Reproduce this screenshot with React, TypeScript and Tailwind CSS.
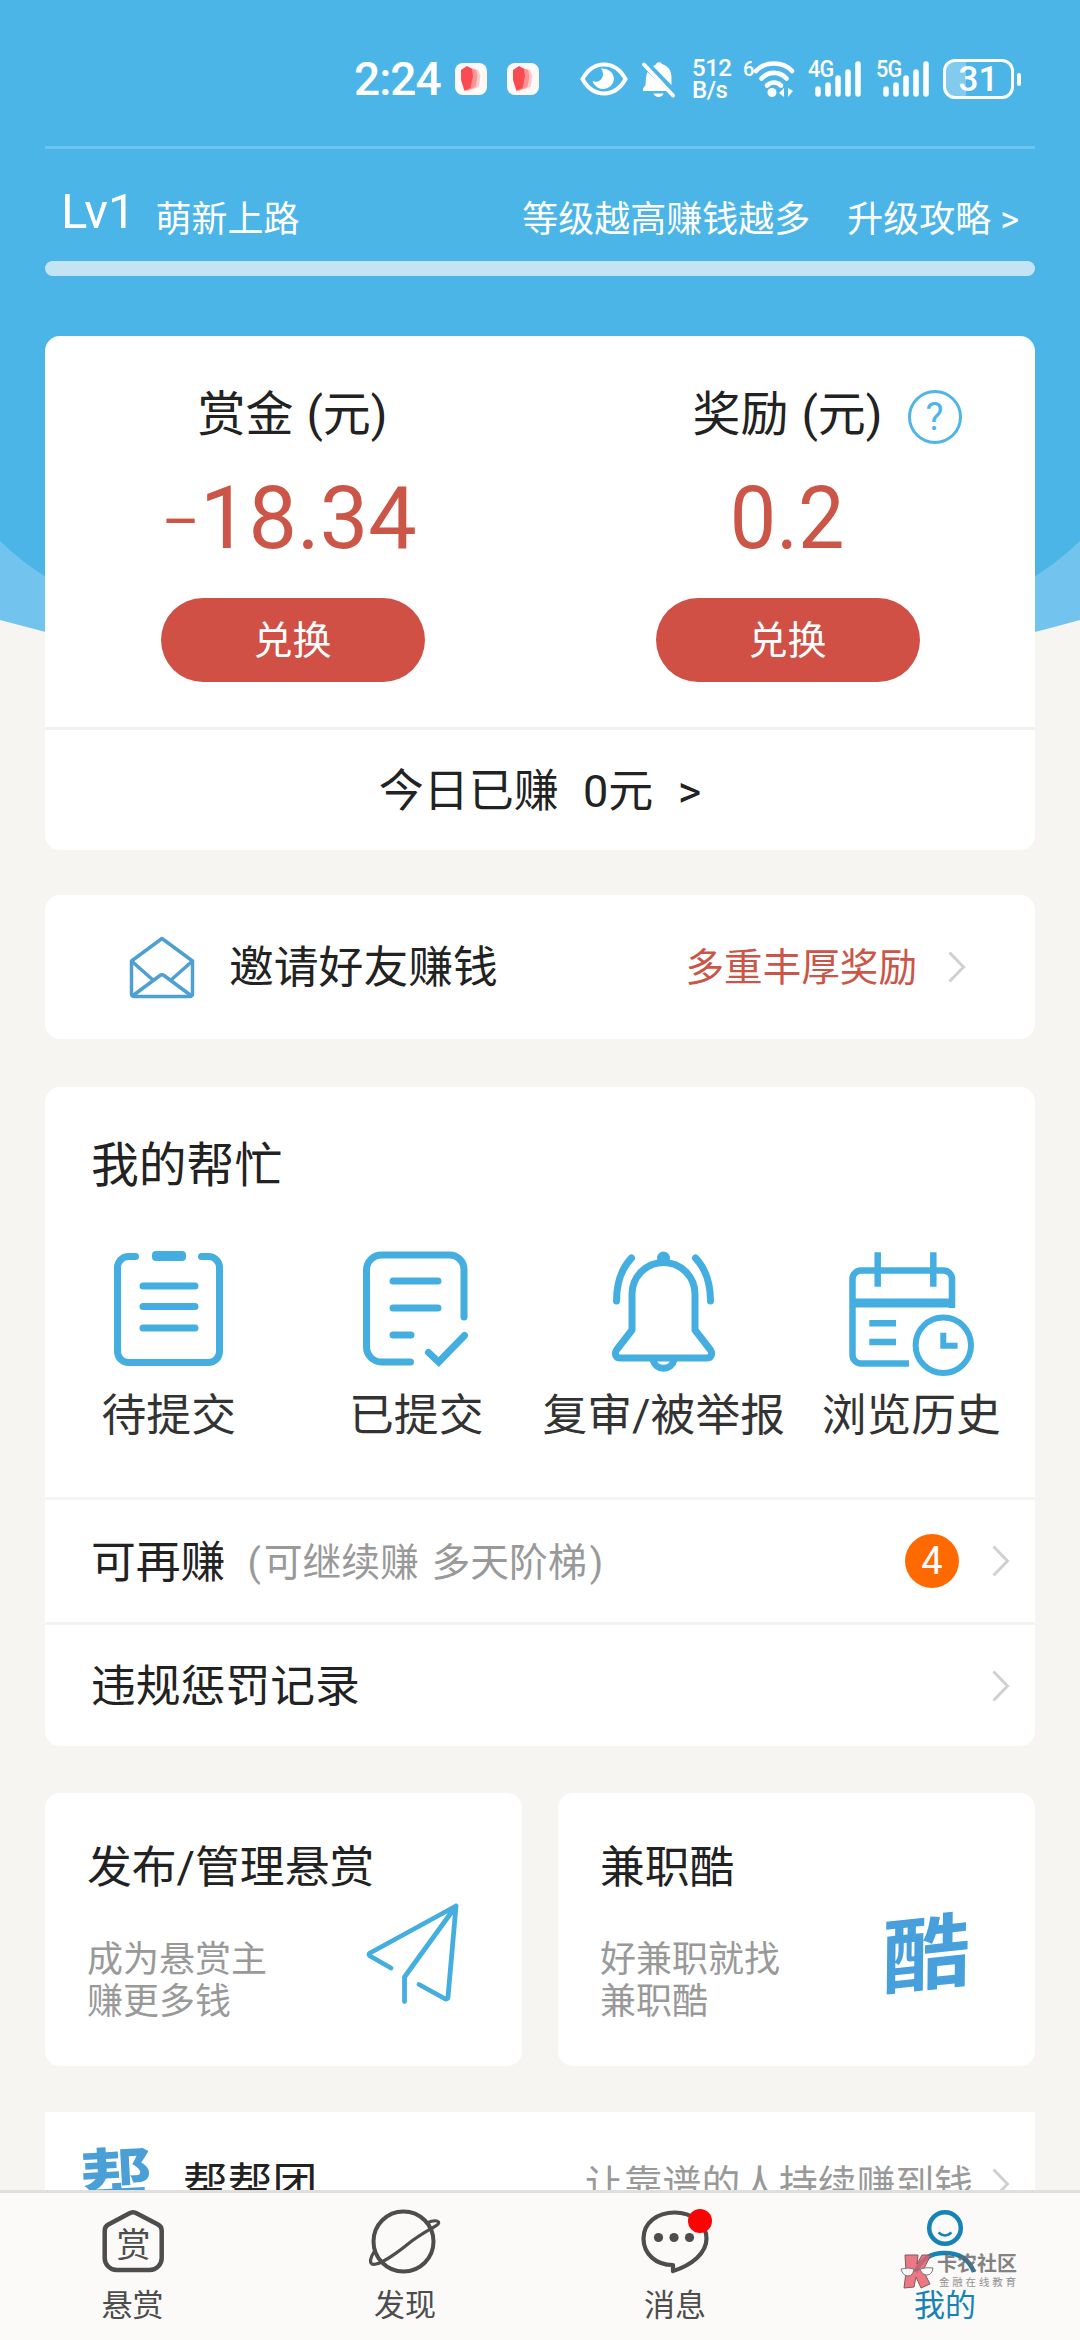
import React from 'react';

const ICON_BLUE = '#45aee0';

const HELP_ITEMS = [
  { label: '待提交', icon: <ClipboardIcon /> },
  { label: '已提交', icon: <SubmittedIcon /> },
  { label: '复审/被举报', icon: <BellIcon /> },
  { label: '浏览历史', icon: <HistoryIcon /> },
];

function ClipboardIcon() {
  return (
    <svg width="120" height="130" viewBox="0 0 120 130" fill="none" stroke={ICON_BLUE} strokeWidth="7" strokeLinecap="round">
      <path d="M26.5 8.5H19.5a11 11 0 0 0-11 11v84a11 11 0 0 0 11 11h80a11 11 0 0 0 11-11v-84a11 11 0 0 0-11-11H92.500" />
      <path d="M34 38h52M34 58.500h52M34 80h52" />
      <rect x="43" y="3" width="34" height="10" rx="4" fill={ICON_BLUE} stroke="none" />
    </svg>
  );
}

function SubmittedIcon() {
  return (
    <svg width="120" height="130" viewBox="0 0 120 130" fill="none" stroke={ICON_BLUE} strokeWidth="7" strokeLinecap="round">
      <path d="M54.500 114H25.500a15 15 0 0 1-15-15V22a15 15 0 0 1 15-15h68A14.500 14.500 0 0 1 108 21.500V69" />
      <path d="M37 33h45M37 60h45M37 87h18" />
      <path d="M72.500 104.500l10.200 9.500L108.500 87.500" />
    </svg>
  );
}

function BellIcon() {
  return (
    <svg width="120" height="130" viewBox="0 0 120 130" fill="none" stroke={ICON_BLUE} strokeWidth="7" strokeLinecap="round">
      <path d="M28 82V46a31.500 31.500 0 0 1 63 0v36l15.500 20c2.500 4 .5 8-3.500 8H16c-4 0-6-4-3.500-8z" strokeLinejoin="round" />
      <circle cx="59.5" cy="10" r="6.500" fill={ICON_BLUE} stroke="none" />
      <path d="M49 112a10.800 10.800 0 0 0 21 0" strokeLinecap="butt" />
      <path d="M27.500 10C18 20 12.500 34 12.500 53M91.500 10C101 20 106.500 34 106.500 53" />
    </svg>
  );
}

function HistoryIcon() {
  return (
    <svg width="134" height="130" viewBox="0 0 134 130" fill="none" stroke={ICON_BLUE} strokeWidth="6.500">
      <path d="M65 115.500H17a8.500 8.500 0 0 1-8.500-8.500V31a8.500 8.500 0 0 1 8.500-8.500h82.500A8.500 8.500 0 0 1 108 31v29" />
      <path d="M8.500 55h99.500" strokeWidth="9" />
      <path d="M33.700 4.300v34.400M89.300 4.300v34.400M25.300 75.300H52M25.300 94H52" />
      <circle cx="99.300" cy="97.300" r="27.700" strokeWidth="6" />
      <path d="M99.300 84.700v13h14.300" strokeWidth="6" />
    </svg>
  );
}

function Chevron() {
  return (
    <svg width="18" height="32" viewBox="0 0 18 32" fill="none" stroke="#d0d0d0" strokeWidth="3" className="shrink-0">
      <path d="M1.500 1.500L15.500 16l-14 14.500" />
    </svg>
  );
}

const AppBadge: React.FC = () => (
  <svg width="32" height="32" viewBox="0 0 32 32">
    <rect width="32" height="32" rx="8" fill="#fdf9f8" />
    <path d="M13 4l10 3 2.500 6-2 11L12 28z" fill="#fcc9c9" />
    <path d="M12 4l9 3 1.500 6-2 11-9 4z" fill="#fb9497" />
    <path d="M6 7l6-4 5 3 1 7-2.500 12-6 3L6 17z" fill="#fb4b52" />
  </svg>
);

const Signal: React.FC<{ label: string }> = ({ label }) => (
  <div className="relative w-[54px] h-[38px]">
    <span className="absolute left-0 top-0 origin-left scale-x-90 text-[24px] leading-[19px] font-medium tracking-[-1px]">{label}</span>
    <svg width="54" height="38" viewBox="0 0 54 38" stroke="#fff" strokeWidth="5.500" strokeLinecap="round">
      <path d="M10 29v5M20 25v9M30 18v16M40 12v22M50 4v30" />
    </svg>
  </div>
);

const StatusBar: React.FC = () => (
  <div className="flex items-center h-[146px] pl-[354px] pt-[12px] text-white">
    <span className="w-[101px] text-[46px] leading-none font-medium tracking-[-1px]">2:24</span>
    <AppBadge />
    <div className="w-[20px]" />
    <AppBadge />
    <svg width="48" height="36" viewBox="0 0 48 36" className="ml-[41px]">
      <path d="M2.500 18C8 8 15 3.500 24 3.500S40 8 45.500 18C40 28 33 32.500 24 32.500S8 28 2.500 18z" fill="none" stroke="#fff" strokeWidth="4" />
      <path d="M21 7.500c5-.5 13 2.500 13 11a11 11 0 0 1-21.500 1.500c4 2 8.500 0 10-4 1-3 .5-6-1.500-8.500z" fill="#fff" />
    </svg>
    <svg width="36" height="40" viewBox="0 0 36 40" className="ml-[13px]">
      <path d="M6.500 13C4.500 17 5 22 4.500 26L2 29.500V32h25zM12 7l3-1.500C15 3 20 2 21 5c7 2.500 9.500 7 9.500 14v7z" fill="#fff" />
      <path d="M12.500 34.500h10c-1 4.500-9 4.500-10 0z" fill="#fff" />
      <path d="M3 5.500l29 31" stroke="#fff" strokeWidth="4" strokeLinecap="round" />
    </svg>
    <div className="ml-[15px] w-[51px] text-[24px] font-medium tracking-[-0.5px]">
      <div className="h-[22px] leading-[22px]">512</div>
      <div className="h-[22px] leading-[22px]">B/s</div>
    </div>
    <div className="relative w-[52px] h-[38px]">
      <span className="absolute left-0 top-0 text-[20px] leading-[19px] font-medium">6</span>
      <svg width="52" height="38" viewBox="0 0 52 38" fill="none" stroke="#fff" strokeWidth="4.600" strokeLinecap="round">
        <path d="M13 11c9-10 27-10 36 0M18.500 18.500c7-7.500 18-7.500 25 0" />
        <path d="M24 25.500c4-4 10-4 14 0" />
        <circle cx="29" cy="32.500" r="4.500" fill="#fff" stroke="none" />
        <path d="M41 28v9l-5-4zM45 37v-9l5 3z" fill="#fff" stroke="none" />
      </svg>
    </div>
    <div className="ml-[13px]"><Signal label="4G" /></div>
    <div className="ml-[14px]"><Signal label="5G" /></div>
    <div className="ml-[13px] w-[71px] h-[40px] rounded-[12px] border-[3px] border-white bg-linear-to-r from-white/30 from-31% to-transparent to-31% flex items-center justify-center text-[35px] leading-none font-medium">
      31
    </div>
    <div className="ml-[3px] w-[4px] h-[13px] rounded-full bg-white" />
  </div>
);

const Balance: React.FC<{ title: string; amount: React.ReactNode; help?: boolean }> = ({ title, amount, help }) => (
  <div className="flex-1 flex flex-col items-center">
    <div className="relative mt-[53px] h-[52px] flex items-center text-[48px] leading-none text-[#222] [word-spacing:1px]">
      {title}
      {help && (
        <div className="absolute left-full ml-[25px] top-px size-[54px] rounded-full border-[3px] border-[#4fb4e6] text-[#4fb4e6] text-[38px] flex items-center justify-center">
          ?
        </div>
      )}
    </div>
    <div className="mt-[33px] h-[88px] text-[88px] leading-[88px] text-[#cb5546]">{amount}</div>
    <button className="mt-[36px] w-[264px] h-[84px] rounded-full bg-[#d15045] text-white text-[39px] leading-none pt-[2px]">兑换</button>
  </div>
);

const TABS = [
  {
    label: '悬赏',
    icon: (
      <div className="relative size-[66px] flex items-center justify-center text-[34px] leading-none">
        <svg width="66" height="66" viewBox="0 0 66 66" fill="none" stroke="#4d4d4d" strokeWidth="4.500" className="absolute inset-0">
          <path d="M29 5.500q4-2.500 8 0L58 16.500q3.700 2 3.700 6V50a12 12 0 0 1-12 12h-33a12 12 0 0 1-12-12V22.500q0-4 3.700-6z" />
        </svg>
        <span className="pt-[8px] pl-[2px]">赏</span>
      </div>
    ),
  },
  {
    label: '发现',
    icon: (
      <svg width="74" height="66" viewBox="0 0 74 66" fill="none" stroke="#4d4d4d" strokeWidth="4">
        <circle cx="35.500" cy="33.500" r="30" />
        <path d="M6.500 43C2 50 1.500 54.500 4 56c4.500 2 18-5.500 36-20C58 21.500 72.500 17.500 70.500 14c-1.500-2-6-1.500-12 1" strokeWidth="3.200" />
      </svg>
    ),
  },
  {
    label: '消息',
    icon: (
      <div className="relative w-[70px] h-[66px]">
        <svg width="70" height="66" viewBox="0 0 70 66" fill="none" stroke="#4d4d4d" strokeWidth="4.200">
          <path d="M33 57C16 57 3.500 46 3.500 30.500S17 4.500 34.500 4.500s32 11 32 26C66.500 45 52 57 33 63z" strokeLinejoin="round" />
          <g fill="#4d4d4d" stroke="none">
            <circle cx="18.500" cy="29.500" r="4.600" />
            <circle cx="34" cy="29.500" r="4.600" />
            <circle cx="49.500" cy="29.500" r="4.600" />
          </g>
        </svg>
        <span className="absolute left-[48px] top-[1px] size-[24px] rounded-full bg-[#fd0202]" />
      </div>
    ),
  },
  {
    label: '我的',
    active: true,
    icon: (
      <svg width="66" height="66" viewBox="0 0 66 66" fill="none" stroke="#1583b5" strokeWidth="4.500">
        <circle cx="33" cy="20" r="15.800" />
        <path d="M26.500 24.500q6.500 6 13 0" strokeWidth="2.500" />
        <path d="M3.500 64C9 51 19 45 32.500 45S57 51 62 64" />
      </svg>
    ),
  },
];

const App: React.FC = () => {
  return (
    <div className="relative w-[1080px] h-[2340px] overflow-hidden bg-[#f6f5f2] flex flex-col font-['Roboto','Noto_Sans_CJK_SC',sans-serif] text-[#222]">
      <svg width="1080" height="720" viewBox="0 0 1080 720" className="absolute left-0 top-0">
        <path d="M0 0H1080V620Q810 695 540 700Q270 695 0 620z" fill="#72c4ee" />
        <path d="M0 0H1080V541Q960 660 540 700Q120 660 0 541z" fill="#4cb5e8" />
      </svg>

      <main className="relative flex-1 min-h-0 overflow-hidden px-[45px]">
        <div className="-mx-[45px]"><StatusBar /></div>

        <div className="h-[3px] bg-[#6cc4ef]" />
        <div className="h-[112px] flex items-start px-[16px] text-[36px] leading-[36px] text-white">
          <span className="pt-[38px] text-[49px] leading-[49px]">Lv1</span>
          <span className="pt-[53px] ml-[20px]">萌新上路</span>
          <span className="pt-[53px] ml-auto">等级越高赚钱越多</span>
          <span className="pt-[53px] ml-[37px]">升级攻略 &gt;</span>
        </div>
        <div className="h-[15px] rounded-full bg-[#c5e4f3]" />

        {/* 余额 */}
        <section className="mt-[60px] h-[514px] rounded-[15px] bg-white">
          <div className="flex h-[391px]">
            <Balance
              title="赏金 (元)"
              amount={
                <span className="inline-block scale-x-98">
                  <span className="inline-block scale-x-140 mr-[7px] font-light">-</span>18.34
                </span>
              }
            />
            <Balance title="奖励 (元)" amount={<span className="inline-block scale-x-94">0.2</span>} help />
          </div>
          <div className="h-[3px] bg-[#f1f1f1]" />
          <div className="h-[120px] pt-[3px] flex items-center justify-center text-[45px] leading-none whitespace-pre [word-spacing:1px]">
            今日已赚  0元  &gt;
          </div>
        </section>

        {/* 邀请 */}
        <section className="mt-[45px] h-[144px] rounded-[15px] bg-white flex items-center pl-[83px] pr-[69px]">
          <svg width="68" height="68" viewBox="0 0 68 68" fill="none" stroke="#4fa0d2" strokeWidth="3.500" strokeLinejoin="round">
            <path d="M34 5.500L3.500 28v32.500q0 3 3 3h55q3 0 3-3V28z" />
            <path d="M3.500 28L25 47M64.500 28L43 47M5 62.500L32 42.500q2-1.500 4 0l27 20" />
          </svg>
          <span className="ml-[33px] pt-[3px] text-[44.800px] leading-none">邀请好友赚钱</span>
          <span className="ml-auto mr-[31px] pt-[3px] text-[38.600px] leading-none text-[#cb5546]">多重丰厚奖励</span>
          <Chevron />
        </section>

        {/* 我的帮忙 */}
        <section className="mt-[48px] h-[659px] rounded-[15px] bg-white">
          <h2 className="h-[161px] pl-[46px] pt-[54px] text-[47.800px] leading-[50px]">我的帮忙</h2>
          <div className="h-[249px] grid grid-cols-4">
            {HELP_ITEMS.map((item) => (
              <div key={item.label} className="flex flex-col items-center">
                {item.icon}
                <span className="mt-[15px] text-[44.800px] leading-[45px] whitespace-nowrap text-[#333]">{item.label}</span>
              </div>
            ))}
          </div>
          <div className="h-[125px] border-t-[3px] border-[#f3f3f3] flex items-center pl-[46px] pr-[25px] text-[44.800px] leading-none">
            <span className="pt-[4px]">可再赚</span>
            <span className="ml-[22px] pt-[4px] text-[38.800px] text-[#999] [word-spacing:3px]">
              <span className="mr-[3px]">(</span>可继续赚 多天阶梯<span className="ml-[3px]">)</span>
            </span>
            <span className="ml-auto mr-[33px] size-[54px] rounded-full bg-[#ff6a00] text-white text-[38px] flex items-center justify-center">4</span>
            <Chevron />
          </div>
          <div className="h-[124px] border-t-[3px] border-[#f3f3f3] flex items-center justify-between pl-[46px] pr-[25px] text-[44.800px] leading-none">
            <span className="pt-[4px]">违规惩罚记录</span>
            <Chevron />
          </div>
        </section>

        <div className="mt-[47px] h-[273px] grid grid-cols-2 gap-[36px]">
          <section className="rounded-[15px] bg-white pl-[42px] pr-[58px] pt-[52px]">
            <h3 className="text-[44.800px] leading-[46px]">发布/管理悬赏</h3>
            <div className="flex justify-between">
              <p className="pt-[48px] text-[36px] leading-[42px] text-[#999]">成为悬赏主<br />赚更多钱</p>
              <svg width="100" height="108" viewBox="0 0 100 108" fill="none" stroke={ICON_BLUE} strokeWidth="4.800" strokeLinecap="round" strokeLinejoin="round" className="mt-[9px]">
                <path d="M27 68L6 56q-2-1.500 0-3L92 6 84 97q-.5 3-3.500 1.500L55 84.500M92 6L40.500 77v24.500" />
              </svg>
            </div>
          </section>
          <section className="rounded-[15px] bg-white pl-[42px] pr-[65px] pt-[52px]">
            <h3 className="text-[44.800px] leading-[46px]">兼职酷</h3>
            <div className="flex justify-between">
              <p className="pt-[48px] text-[36px] leading-[42px] text-[#999]">好兼职就找<br />兼职酷</p>
              <span className="mt-[19px] -skew-x-6 -rotate-6 scale-y-92 text-[88px] leading-[90px] font-bold text-[#479fdb]">酷</span>
            </div>
          </section>
        </div>

        <section className="mt-[46px] h-[144px] bg-white flex items-center pl-[36px] pr-[25px]">
          <span className="text-[72px] leading-none font-bold text-[#4a9fd6] -rotate-3">帮</span>
          <span className="ml-[30px] pt-[2px] text-[44.800px] leading-none">帮帮团</span>
          <span className="ml-auto mr-[19px] pt-[2px] text-[38.800px] leading-none text-[#999]">让靠谱的人持续赚到钱</span>
          <Chevron />
        </section>
      </main>

      <nav className="relative h-[150px] border-t-[3px] border-[#e0dfdd] bg-[#fbfaf8] grid grid-cols-4">
        {TABS.map((tab) => (
          <div
            key={tab.label}
            className={`flex flex-col items-center pt-[15px] ${tab.active ? 'text-[#1583b5]' : 'text-[#4d4d4d]'} first:pr-[5px]`}
          >
            {tab.icon}
            <span className="mt-[16px] text-[31px] leading-[32px]">{tab.label}</span>
          </div>
        ))}

        <div className="absolute left-[900px] top-[61px] flex">
          <svg width="34" height="35" viewBox="0 0 34 35">
            <path d="M5 1h13l-1 9 5-9h9l-8 15 7 14-9 4-5-11-2 10-10 1 2-16z" fill="#e8606e" fillOpacity=".85" stroke="#7d5c60" strokeWidth="1" />
            <path d="M1 15q8-2 13 0-1 7-6 7-5 0-7-7zM20 15q6-2 13-1-1 7-6 7-5 0-7-6z" fill="#fff" fillOpacity=".9" stroke="#777" strokeWidth="1" />
            <path d="M14 16l6-1" stroke="#777" />
          </svg>
          <div className="ml-[3px] text-[#666] opacity-80">
            <div className="text-[20px] leading-[21px] font-bold">卡农社区</div>
            <div className="mt-[2px] ml-[2px] text-[10.500px] leading-[11px] tracking-[2.800px] text-[#777]">金融在线教育</div>
          </div>
        </div>
      </nav>
    </div>
  );
};

export default App;
